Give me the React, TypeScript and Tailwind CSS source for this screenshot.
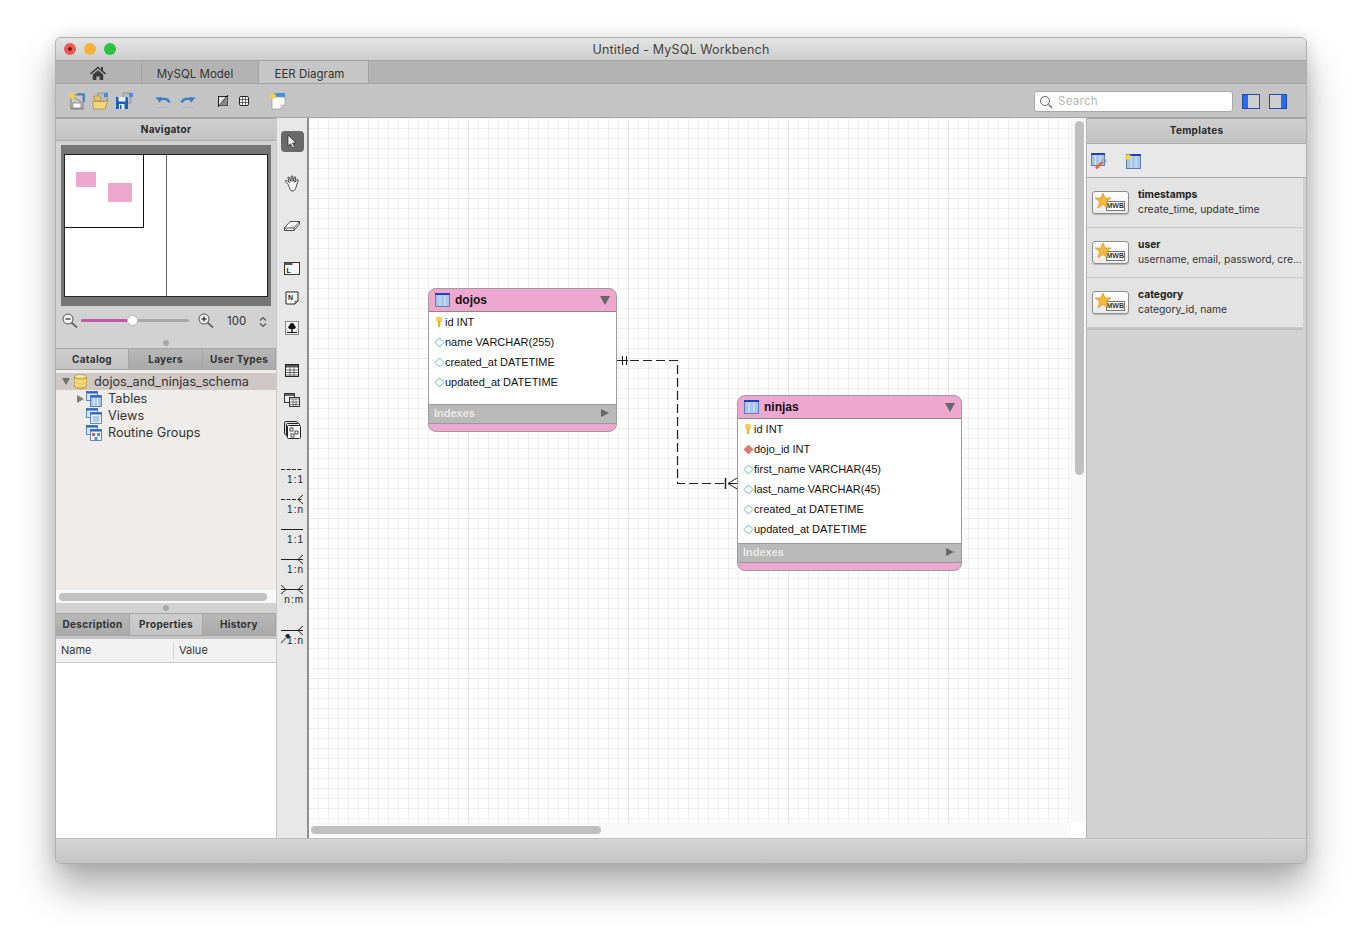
import React from 'react';

const ui = "font-['Inter','Liberation_Sans',sans-serif]";
const helv = "font-['Liberation_Sans',Arial,sans-serif]";

const TrafficLight = ({ color, dot }: { color: string; dot?: boolean }) => (
  <div className={`flex h-3 w-3 items-center justify-center rounded-full ${color}`}>
    {dot && <div className="h-1 w-1 rounded-full bg-[#7a1512]" />}
  </div>
);

const Home = () => (
  <svg width="16" height="14" viewBox="0 0 16 14">
    <path d="M8 .5 0 7.2l1 1.2L8 2.6l7 5.8 1-1.2-3-2.5V1h-2v2.6z" fill="#3c3c3c" />
    <path d="M2.8 8.6 8 4.3l5.2 4.3V14H9.6v-3.6H6.4V14H2.8z" fill="#3c3c3c" />
  </svg>
);

const Burst = ({ x = 0, y = 0 }: { x?: number; y?: number }) => (
  <path
    d={`M${x + 4} ${y}l.9 2.1 2-1-1 2 2.1.9-2.1.9 1 2-2-1-.9 2.1-.9-2.1-2 1 1-2L${x} ${y + 4}l2.1-.9-1-2 2 1z`}
    fill="#f5d44a"
  />
);

const NewDoc = () => (
  <svg width="18" height="18" viewBox="0 0 18 18">
    <rect x="9" y="1" width="8" height="9" fill="#4a90d9" />
    <rect x="3" y="3" width="12" height="14" fill="#c8c8c8" stroke="#666" strokeWidth=".8" />
    <rect x="5" y="11" width="8" height="5" fill="#fff" stroke="#555" strokeWidth=".6" />
    <path d="M6 5l7 5" stroke="#888" />
    <Burst />
  </svg>
);

const OpenDoc = () => (
  <svg width="18" height="18" viewBox="0 0 18 18">
    <rect x="6" y="1" width="9" height="9" fill="#bbb" stroke="#777" strokeWidth=".6" />
    <rect x="12" y="1" width="4" height="4" fill="#3f8ee0" />
    <path d="M1.5 4h6l1 2v3H3z" fill="#e4c472" stroke="#a9812c" strokeWidth=".6" />
    <path d="M1.5 17 .8 9.5h12L16 8l-3 9z" fill="#f5d67e" stroke="#b38a2f" strokeWidth=".8" />
  </svg>
);

const SaveDoc = () => (
  <svg width="18" height="18" viewBox="0 0 18 18">
    <rect x="7" y="1" width="8" height="10" fill="#bdbdbd" stroke="#777" strokeWidth=".6" />
    <rect x="13" y="1" width="4" height="4" fill="#3f8ee0" />
    <path d="M0 5h11l1 1v11H0z" fill="#1d5fb6" />
    <rect x="2.5" y="5" width="7" height="4.5" fill="#e8eef6" />
    <rect x="3" y="12" width="5.5" height="5" fill="#e8eef6" />
    <rect x="4" y="13" width="1.5" height="4" fill="#1d5fb6" />
  </svg>
);

const Undo = ({ flip }: { flip?: boolean }) => (
  <svg width="16" height="18" viewBox="0 0 16 18" className={flip ? '-scale-x-100' : ''}>
    <path d="M14.500 10.500C13 6.500 8 6 4.500 8" fill="none" stroke="#3f7fc4" strokeWidth="2.400" />
    <path d="M.5 5.500 7 5 5 11z" fill="#3f7fc4" />
    <rect x="2" y="15" width="12" height="1" fill="#b4b4b4" />
  </svg>
);

const NoGrid = () => (
  <svg width="12" height="14" viewBox="0 0 12 14">
    <rect x="1.500" y="2.500" width="9" height="9" fill="#ddd" stroke="#222" />
    <path d="M1 13 11 1" stroke="#111" />
    <path d="M2 11.500 10.500 2.500v9z" fill="#888" />
  </svg>
);

const GridIcon = () => (
  <svg width="10" height="10" viewBox="0 0 10 10">
    <rect x=".5" y=".5" width="9" height="9" rx="1.500" fill="#fff" stroke="#222" />
    <path d="M3.500 .5v9M6.500 .5v9M.5 3.500h9M.5 6.500h9" stroke="#333" strokeWidth=".7" />
  </svg>
);

const Note = () => (
  <svg width="17" height="18" viewBox="0 0 17 18">
    <rect x="3" y="1" width="13" height="4" fill="#3f8ee0" />
    <path d="M3 5h13v8l-4 4H3z" fill="#fff" stroke="#999" strokeWidth=".7" />
    <path d="M16 13h-4v4z" fill="#ddd" stroke="#999" strokeWidth=".6" />
    <Burst />
  </svg>
);

const Magnifier = ({ plus }: { plus?: boolean }) => (
  <svg width="16" height="16" viewBox="0 0 16 16">
    <path d="M9.500 9.500 15 14.500" stroke="#666" strokeWidth="1.800" />
    <circle cx="6" cy="6" r="5" fill="#f2f2f2" stroke="#555" />
    <path d="M3.500 6h5" stroke="#222" strokeWidth="1.200" />
    {plus && <path d="M6 3.500v5" stroke="#222" strokeWidth="1.200" />}
  </svg>
);

const Database = () => (
  <svg width="13" height="15" viewBox="0 0 13 15">
    <path d="M.5 2.500v10c0 1 2.500 2 6 2s6-1 6-2v-10z" fill="#efc85a" stroke="#a98a2c" strokeWidth=".7" />
    <ellipse cx="6.500" cy="2.500" rx="6" ry="2" fill="#f8e6a6" stroke="#a98a2c" strokeWidth=".7" />
    <path d="M.5 6c0 1 2.500 2 6 2s6-1 6-2M.5 9.500c0 1 2.500 2 6 2s6-1 6-2" fill="none" stroke="#fff3c4" />
  </svg>
);

const FolderIcon = ({ kind }: { kind: 'tables' | 'views' | 'routines' }) => (
  <svg width="16" height="16" viewBox="0 0 16 16">
    <rect x=".5" y=".5" width="11" height="9" fill="#dbe8f7" stroke="#3a6fb5" strokeWidth=".8" />
    <rect x=".5" y=".5" width="11" height="2" fill="#2d66c4" />
    <rect x="4.500" y="4.500" width="11" height="11" fill={kind === 'tables' ? '#a9c6e9' : '#eef4fb'} stroke="#3a6fb5" strokeWidth=".8" />
    <rect x="4.500" y="4.500" width="11" height="2" fill="#2d66c4" />
    {kind === 'tables' && <path d="M8 7v8M11.500 7v8" stroke="#fff" />}
    {kind === 'views' && <path d="M6.500 9h7M6.500 11h7M6.500 13h7" stroke="#7a9fcb" />}
    {kind === 'routines' && (
      <>
        <rect x="6" y="8" width="3" height="3" fill="#d8574f" />
        <rect x="11" y="8" width="3" height="3" fill="#5a8ad0" />
        <rect x="8.500" y="12" width="3" height="3" fill="#5a8ad0" />
      </>
    )}
  </svg>
);

const TreeRow = ({ label, kind, arrow }: { label: string; kind: 'tables' | 'views' | 'routines'; arrow?: boolean }) => (
  <div className="flex h-[17px] items-center pl-[21px]">
    <div className="w-[9px]">
      {arrow && <div className="h-0 w-0 border-y-[4.5px] border-l-[7px] border-y-transparent border-l-[#7f7f7f]" />}
    </div>
    <FolderIcon kind={kind} />
    <span className="ml-[6px] text-[12.7px] text-[#333]">{label}</span>
  </div>
);

const PanelHeader = ({ title, h }: { title: string; h: string }) => (
  <div className={`flex ${h} items-center justify-center border-y border-[#a9a9a9] bg-linear-to-b from-[#cfcfcf] to-[#c2c2c2] text-[10px] font-bold tracking-[0.3px] text-[#2a2a2a]`}>
    {title}
  </div>
);

const Tab = ({ label, active, w }: { label: string; active?: boolean; w: string }) => (
  <div
    className={`flex ${w} items-center justify-center border-r border-[#a5a5a5] text-[10px] font-bold tracking-[0.3px] text-[#333] ${
      active ? 'bg-linear-to-b from-[#cdcdcd] to-[#c2c2c2]' : 'bg-linear-to-b from-[#b8b8b8] to-[#a9a9a9]'
    }`}
  >
    {label}
  </div>
);

const Grip = ({ h }: { h: string }) => (
  <div className={`flex ${h} items-center justify-center`}>
    <div className="h-[6px] w-[6px] rounded-full bg-[#a8a8a8]" />
  </div>
);

const Navigator = () => (
  <div className="flex flex-col">
    <PanelHeader title="Navigator" h="h-[23px]" />
    <div className="mx-[5px] mt-[4px] h-[161px] w-[210px] bg-[#757575] pl-[3px] pt-[9px]">
      <div className="relative h-[143px] w-[204px] border border-[#222] bg-white">
        <div className="absolute bottom-0 left-[101px] top-0 w-px bg-[#666]" />
        <div className="absolute left-0 top-0 h-[73px] w-[79px] border-b border-r border-[#111]">
          <div className="absolute left-[11px] top-[17px] h-[15px] w-5 bg-[#eea8d0]" />
          <div className="absolute left-[43px] top-[28px] h-[19px] w-6 bg-[#eea8d0]" />
        </div>
      </div>
    </div>
    <div className="flex h-[31px] items-center pb-[2px] pl-[6px]">
      <Magnifier />
      <div className="relative ml-[3px] h-[3px] w-[108px] rounded-full bg-[#a8a8a8]">
        <div className="h-[3px] w-[51px] rounded-full bg-[#c05aa8]" />
        <div className="absolute left-[46px] top-[-4px] h-[11px] w-[11px] rounded-full border border-[#bbb] bg-white" />
      </div>
      <div className="ml-[9px]">
        <Magnifier plus />
      </div>
      <span className="ml-[13px] mt-[3px] text-[11.5px] text-[#333]">100</span>
      <svg width="8" height="12" viewBox="0 0 8 12" className="ml-[13px] mt-[3px]">
        <path d="M1 4.500 4 1.500l3 3M1 7.500l3 3 3-3" fill="none" stroke="#555" strokeWidth="1.200" />
      </svg>
    </div>
    <Grip h="h-[11px]" />
  </div>
);

const Catalog = () => (
  <div className="flex flex-col">
    <div className="flex h-[22px] border-y border-[#a5a5a5]">
      <Tab label="Catalog" active w="w-[73px]" />
      <Tab label="Layers" w="w-[74px]" />
      <Tab label="User Types" w="w-[73px]" />
    </div>
    <div className="h-[220px] bg-[#f0ecea] pt-[3px]">
      <div className="flex h-[17px] items-center bg-[#cfc8c6] pl-[6px]">
        <div className="h-0 w-0 border-x-[4.5px] border-t-[7px] border-x-transparent border-t-[#6f6f6f]" />
        <div className="ml-[4px]">
          <Database />
        </div>
        <span className="ml-[7px] text-[12.7px] text-[#333]">dojos_and_ninjas_schema</span>
      </div>
      <TreeRow label="Tables" kind="tables" arrow />
      <TreeRow label="Views" kind="views" />
      <TreeRow label="Routine Groups" kind="routines" />
    </div>
    <div className="flex h-[13px] items-center bg-[#f9f9f9] pl-[3px]">
      <div className="h-[8px] w-[208px] rounded-full bg-[#c0c0c0]" />
    </div>
    <Grip h="h-[10px]" />
  </div>
);

const Properties = () => (
  <div className="flex min-h-0 flex-1 flex-col">
    <div className="flex h-[23px] border-y border-[#a5a5a5]">
      <Tab label="Description" w="w-[74px]" />
      <Tab label="Properties" active w="w-[73px]" />
      <Tab label="History" w="w-[73px]" />
    </div>
    <div className="h-[3px] bg-[#c4c4c4]" />
    <div className="flex h-[24px] items-center border-b border-[#c4c4c4] bg-[#f2f2f2] text-[11px] text-[#333]">
      <div className="flex h-[17px] w-[118px] items-center border-r border-[#d0d0d0] pl-[5px]">Name</div>
      <div className="pl-[5px]">Value</div>
    </div>
    <div className="flex-1 bg-white" />
  </div>
);

const ToolIcon = ({ children, mt }: { children: React.ReactNode; mt: string }) => (
  <div className={`flex h-[30px] items-center justify-center ${mt}`}>{children}</div>
);

const Rel = ({ dashed, kind, label }: { dashed?: boolean; kind: 'one' | 'many' | 'nm' | 'pick'; label: string }) => (
  <div className="relative h-[20px] w-[24px]">
    <svg width="24" height="12" viewBox="0 0 24 12" className="absolute left-0 top-0">
      <path d="M1 5.500h22" stroke="#222" strokeDasharray={dashed ? '4 1.500' : undefined} />
      {(kind === 'many' || kind === 'nm' || kind === 'pick') && <path d="M23 1l-5 4.500 5 4.500" fill="none" stroke="#222" />}
      {kind === 'nm' && <path d="M1 1l5 4.500-5 4.500" fill="none" stroke="#222" />}
    </svg>
    {kind === 'pick' && (
      <svg width="11" height="11" viewBox="0 0 11 11" className="absolute left-0 top-[8px]">
        <path d="M1 10 6 5" stroke="#777" strokeWidth="1.500" />
        <path d="M5 3l3 3 2-2-1-3-2 0z" fill="#222" />
      </svg>
    )}
    <span className={`absolute right-0 top-[10px] text-[10px] leading-[11px] tracking-[1px] text-[#222] ${helv}`}>
      {label}
    </span>
  </div>
);

const ToolStrip = () => (
  <div className="flex w-[33px] shrink-0 flex-col border-r-2 border-l border-r-[#8f8f8f] border-l-[#c8c8c8] bg-[#e8e8e8]">
    <ToolIcon mt="mt-[8px]">
      <div className="flex h-[21px] w-[23px] items-center justify-center rounded-[4px] bg-[#6a6a6a]">
        <svg width="10" height="15" viewBox="0 0 10 15">
          <path d="M1 1v11l2.500-2.300L5.500 14l2-1-2-4H9z" fill="#f2f2f2" stroke="#222" strokeWidth=".7" />
        </svg>
      </div>
    </ToolIcon>
    <ToolIcon mt="mt-[12px]">
      <svg width="17" height="17" viewBox="0 0 16 16">
        <path d="M4 9 1.500 6.500c-1-1 .5-2 1.500-1L5 7 3.800 2.800c-.3-1 1-1.300 1.300-.3L6.500 6 6.800 1.500c0-1 1.400-1 1.400 0L8.500 6l1.200-3.800c.3-1 1.500-.6 1.300.4L10 7l2-2.500c.7-.8 1.800 0 1.200 1C12 8 12 10 11 12.500c-.6 1.500-1.500 2.500-3.500 2.500C5.500 15 5 11 4 9z" fill="#fff" stroke="#222" strokeWidth=".8" />
      </svg>
    </ToolIcon>
    <ToolIcon mt="mt-[13px]">
      <svg width="16" height="12" viewBox="0 0 16 12">
        <path d="M.5 8 6 1.500h9.500V4L10 10.500H.5z" fill="#fff" stroke="#222" strokeWidth=".8" />
        <path d="M.5 8H10l5.500-6.500M10 8v2.500" fill="none" stroke="#222" strokeWidth=".8" />
      </svg>
    </ToolIcon>
    <ToolIcon mt="mt-[12px]">
      <svg width="16" height="13" viewBox="0 0 16 13">
        <rect x=".5" y=".5" width="15" height="12" fill="#f6f6f6" stroke="#333" />
        <rect x=".5" y=".5" width="8" height="2.500" fill="#555" />
        <text x="2.500" y="10.500" fontSize="7" fontWeight="700" fill="#222" fontFamily="Liberation Sans">L</text>
      </svg>
    </ToolIcon>
    <ToolIcon mt="mt-0">
      <svg width="14" height="14" viewBox="0 0 14 14">
        <path d="M1 1h12v9l-3 3H1z" fill="#fff" stroke="#222" />
        <path d="M13 10h-3v3z" fill="#ccc" stroke="#222" strokeWidth=".6" />
        <text x="3" y="8.500" fontSize="7" fontWeight="700" fill="#222" fontFamily="Liberation Sans">N</text>
      </svg>
    </ToolIcon>
    <ToolIcon mt="mt-0">
      <svg width="14" height="14" viewBox="0 0 14 14">
        <rect x=".5" y=".5" width="13" height="13" fill="#f4f4f4" stroke="#888" />
        <path d="M7 2c2 0 2.500 1.500 2.500 2.500 1.500.5 2 3-.5 3.500H5C2.500 7.500 3 5 4.500 4.500 4.500 3.500 5 2 7 2z" fill="#111" />
        <rect x="6.300" y="8" width="1.400" height="3" fill="#111" />
        <rect x="2" y="11" width="10" height="1" fill="#111" />
      </svg>
    </ToolIcon>
    <ToolIcon mt="mt-[12px]">
      <svg width="14" height="13" viewBox="0 0 14 13">
        <rect x=".5" y=".5" width="13" height="12" fill="#fff" stroke="#222" />
        <rect x="1" y="1" width="12" height="2.500" fill="#555" />
        <path d="M1 6h12M1 8.500h12M1 11h12M5 3.500v9M9 3.500v9" stroke="#444" strokeWidth=".8" />
      </svg>
    </ToolIcon>
    <ToolIcon mt="mt-0">
      <svg width="16" height="14" viewBox="0 0 16 14">
        <rect x=".5" y=".5" width="10" height="9" fill="#eee" stroke="#333" />
        <path d="M1 2h9" stroke="#333" strokeWidth="1.500" />
        <rect x="5.500" y="4.500" width="10" height="9" fill="#fff" stroke="#333" />
        <path d="M6 6h9M6 9h9M6 11.500h9M9 6v7M12 6v7" stroke="#444" strokeWidth=".7" />
      </svg>
    </ToolIcon>
    <ToolIcon mt="mt-0">
      <svg width="17" height="18" viewBox="0 0 17 18">
        <rect x=".5" y=".5" width="13" height="13" rx="1" fill="#ddd" stroke="#222" />
        <rect x="2.500" y="2.500" width="13" height="13" rx="1" fill="#eee" stroke="#222" />
        <rect x="3.500" y="4.500" width="13" height="13" rx="1" fill="#fff" stroke="#222" />
        <rect x="6" y="7" width="3" height="3" fill="#fff" stroke="#222" strokeWidth=".8" />
        <rect x="11" y="10" width="3" height="3" fill="#fff" stroke="#222" strokeWidth=".8" />
        <rect x="7" y="13" width="3" height="3" fill="#fff" stroke="#222" strokeWidth=".8" />
      </svg>
    </ToolIcon>
    <ToolIcon mt="mt-[14px]"><Rel dashed kind="one" label="1:1" /></ToolIcon>
    <ToolIcon mt="mt-0"><Rel dashed kind="many" label="1:n" /></ToolIcon>
    <ToolIcon mt="mt-0"><Rel kind="one" label="1:1" /></ToolIcon>
    <ToolIcon mt="mt-0"><Rel kind="many" label="1:n" /></ToolIcon>
    <ToolIcon mt="mt-0"><Rel kind="nm" label="n:m" /></ToolIcon>
    <ToolIcon mt="mt-[11px]"><Rel kind="pick" label="1:n" /></ToolIcon>
  </div>
);

const KeyIcon = () => (
  <svg width="8" height="12" viewBox="0 0 8 12">
    <ellipse cx="4" cy="3.500" rx="3" ry="3" fill="#f5cf4d" />
    <rect x="3" y="5" width="2.200" height="6" fill="#e6b32e" />
  </svg>
);

const Diamond = ({ fk }: { fk?: boolean }) => (
  <svg width="11" height="11" viewBox="0 0 11 11">
    <path d="M5.500 1 10 5.500 5.500 10 1 5.500z" fill={fk ? '#e0767a' : '#fff'} stroke={fk ? '#c98080' : '#62b5ba'} />
  </svg>
);

const TableGlyph = () => (
  <svg width="15" height="14" viewBox="0 0 15 14">
    <rect x=".5" y=".5" width="14" height="13" fill="#a9c6e9" stroke="#5a7fb5" />
    <rect x="0" y="0" width="15" height="2" fill="#1f3fc4" />
    <path d="M5 2.500v10.500M10 2.500v10.500" stroke="#dce9f7" />
  </svg>
);

type Column = { name: string; type: 'pk' | 'fk' | 'col' };

const EerTable = ({ title, cols, pos, bodyPad }: { title: string; cols: Column[]; pos: string; bodyPad: string }) => (
  <div className={`absolute flex flex-col overflow-hidden rounded-[8px] border border-[#9c9c9c] bg-[#eea8d0] ${helv} ${pos}`}>
    <div className="flex h-[23px] shrink-0 items-center border-b border-[#888] pl-[6px] pr-[6px]">
      <TableGlyph />
      <span className="ml-[5px] text-[12px] font-bold text-[#111]">{title}</span>
      <div className="ml-auto h-0 w-0 border-x-[5px] border-t-[9px] border-x-transparent border-t-[#666]" />
    </div>
    <div className={`flex flex-col bg-white ${bodyPad}`}>
      {cols.map((c) => (
        <div key={c.name} className="flex h-[20px] shrink-0 items-center pl-[4px] text-[11px] text-[#111]">
          <div className="flex w-[12px] justify-center">
            {c.type === 'pk' ? <KeyIcon /> : <Diamond fk={c.type === 'fk'} />}
          </div>
          <span>{c.name}</span>
        </div>
      ))}
    </div>
    <div className="flex h-[20px] shrink-0 items-center border-y border-[#999] bg-[#b9b9b9] pb-[2px] pl-[5px] pr-[7px]">
      <span className="text-[11px] font-bold text-[#e8e8e8]">Indexes</span>
      <div className="ml-auto h-0 w-0 border-y-[4.5px] border-l-[8px] border-y-transparent border-l-[#666]" />
    </div>
    <div className="flex-1" />
  </div>
);

const Canvas = () => (
  <div className="relative min-w-0 flex-1 overflow-hidden bg-white">
    <div className="absolute bottom-[15px] left-0 right-[15px] top-0 bg-[linear-gradient(to_right,#e6e6e6_1px,transparent_1px),linear-gradient(to_bottom,#e6e6e6_1px,transparent_1px),linear-gradient(to_right,#f0f0f0_1px,transparent_1px),linear-gradient(to_bottom,#f0f0f0_1px,transparent_1px)] bg-[size:160px_160px,160px_160px,10px_10px,10px_10px] bg-[position:-1px_80px,-1px_80px,-1px_0px,-1px_0px]" />
    <svg width="777" height="720" viewBox="309 118 777 720" className="absolute left-0 top-0">
      <path d="M617 360.500h60.500v123H738" fill="none" stroke="#222" strokeWidth="1.200" strokeDasharray="9 4" />
      <rect x="617" y="359" width="10" height="3" fill="#fff" />
      <path d="M617 360.500h11M622.500 356v9M626.500 356v9" fill="none" stroke="#222" />
      <path d="M725.500 478v11" stroke="#222" strokeWidth="1.500" />
      <path d="M738 477.500l-10 6 10 6" fill="none" stroke="#222" />
    </svg>
    <EerTable
      title="dojos"
      pos="left-[119px] top-[170px] h-[144px] w-[189px]"
      bodyPad="h-[92px]"
      cols={[
        { name: 'id INT', type: 'pk' },
        { name: 'name VARCHAR(255)', type: 'col' },
        { name: 'created_at DATETIME', type: 'col' },
        { name: 'updated_at DATETIME', type: 'col' },
      ]}
    />
    <EerTable
      title="ninjas"
      pos="left-[428px] top-[277px] h-[176px] w-[225px]"
      bodyPad="h-[124px]"
      cols={[
        { name: 'id INT', type: 'pk' },
        { name: 'dojo_id INT', type: 'fk' },
        { name: 'first_name VARCHAR(45)', type: 'col' },
        { name: 'last_name VARCHAR(45)', type: 'col' },
        { name: 'created_at DATETIME', type: 'col' },
        { name: 'updated_at DATETIME', type: 'col' },
      ]}
    />
    <div className="absolute bottom-0 right-0 top-0 w-[15px] bg-[#f9f9f9] pl-[4px] pt-[3px]">
      <div className="h-[354px] w-[9px] rounded-full bg-[#c0c0c0]" />
    </div>
    <div className="absolute bottom-0 left-0 right-[15px] h-[15px] bg-[#f9f9f9] pl-[2px] pt-[3px]">
      <div className="h-[8px] w-[290px] rounded-full bg-[#c0c0c0]" />
    </div>
    <div className="absolute bottom-0 right-0 h-[16px] w-[15px] bg-white" />
  </div>
);

const MwbBadge = () => (
  <div className="relative h-[23px] w-[37px] rounded-[3px] border border-[#8e8e8e] bg-linear-to-b from-white to-[#ececec] shadow-[0_1px_1px_rgba(0,0,0,0.2)]">
    <div className={`absolute bottom-[2px] right-[3px] border border-[#777] bg-white text-[7px] font-bold leading-[8px] text-[#333] ${helv}`}>
      MWB
    </div>
    <svg width="16" height="15" viewBox="0 0 16 15" className="absolute left-[2px] top-[1px]">
      <path d="M8 0l2.200 5H16l-4.500 3.600L13 15 8 11.500 3 15l1.500-6.400L0 5h5.800z" fill="#f5b93c" stroke="#d08a1c" strokeWidth=".6" />
    </svg>
  </div>
);

const TemplateItem = ({ name, fields }: { name: string; fields: string }) => (
  <div className="flex h-[50px] items-center border-b border-[#c8c8c8] bg-[#e3e3e3] pb-[2px] pl-[5px]">
    <div className="mt-[2px]">
      <MwbBadge />
    </div>
    <div className="ml-[9px] min-w-0 text-[10.3px] leading-[15px] text-[#333]">
      <div className="font-bold text-[#222]">{name}</div>
      <div className="whitespace-nowrap">{fields}</div>
    </div>
  </div>
);

const Templates = () => (
  <div className="flex w-[220px] shrink-0 flex-col border-l border-[#b5b5b5] bg-[#d2d2d2]">
    <PanelHeader title="Templates" h="h-[26px] pb-[1px]" />
    <div className="flex h-[34px] items-center gap-[17px] border-b border-[#a5a5a5] bg-[#e8e8e8] pl-[4px]">
      <svg width="16" height="16" viewBox="0 0 16 16">
        <rect x=".5" y=".5" width="13" height="12" fill="#a9c6e9" stroke="#5a7fb5" />
        <rect x="0" y="0" width="14" height="2" fill="#1f3fc4" />
        <path d="M4.500 2v10M9 2v10" stroke="#dce9f7" />
        <path d="M5 15.500 11 9.500" stroke="#e8662a" strokeWidth="2.500" />
        <circle cx="13" cy="8" r="2" fill="none" stroke="#999" />
      </svg>
      <svg width="17" height="16" viewBox="0 0 17 16">
        <rect x="2.500" y="1.500" width="14" height="14" fill="#a9c6e9" stroke="#5a7fb5" />
        <rect x="2" y="1" width="15" height="2" fill="#1f3fc4" />
        <path d="M7 3v12M12 3v12" stroke="#dce9f7" />
        <Burst />
      </svg>
    </div>
    <div className="mr-[3px] flex flex-col border-b-2 border-[#c0c0c0]">
      <TemplateItem name="timestamps" fields="create_time, update_time" />
      <TemplateItem name="user" fields="username, email, password, cre..." />
      <TemplateItem name="category" fields="category_id, name" />
    </div>
  </div>
);

export default function App() {
  return (
    <div className={`h-[937px] w-[1362px] overflow-hidden bg-white pl-[55px] pt-[37px] ${ui}`}>
      <div className="flex h-[827px] w-[1252px] flex-col overflow-hidden rounded-[6px] border border-[#b0b0b0] bg-[#d2d2d2] shadow-[0_24px_38px_rgba(0,0,0,0.32),0_0_16px_rgba(0,0,0,0.12)]">
        {/* title bar */}
        <div className="relative flex h-[22px] shrink-0 items-center justify-center bg-linear-to-b from-[#e4e4e4] to-[#cdcdcd] pt-[2px]">
          <div className="absolute left-[8px] top-[5px] flex gap-2">
            <TrafficLight color="bg-[#ee5b52]" dot />
            <TrafficLight color="bg-[#f5b23a]" />
            <TrafficLight color="bg-[#2cc23f]" />
          </div>
          <span className="text-[12.5px] tracking-[0.15px] text-[#444]">Untitled - MySQL Workbench</span>
        </div>
        {/* tabs */}
        <div className="flex h-[24px] shrink-0 border-y border-[#a3a3a3] bg-[#b3b3b3] text-[11.5px] text-[#333]">
          <div className="flex w-[86px] items-center justify-center border-r border-[#a3a3a3] pr-[2px] pt-[2px]">
            <Home />
          </div>
          <div className="flex w-[117px] items-center justify-center border-r border-[#a3a3a3] pr-[10px] pt-[5px]">MySQL Model</div>
          <div className="flex w-[110px] items-center justify-center border-r border-[#a3a3a3] bg-[#c6c6c6] pr-[8px] pt-[5px]">EER Diagram</div>
        </div>
        {/* toolbar */}
        <div className="flex h-[34px] shrink-0 items-center border-b border-[#a5a5a5] bg-[#c4c4c4]">
          <div className="ml-[12px] flex items-center gap-[6px]">
            <NewDoc />
            <OpenDoc />
            <SaveDoc />
          </div>
          <div className="ml-[21px] flex items-center gap-[9px]">
            <Undo />
            <Undo flip />
          </div>
          <div className="ml-[21px] flex items-center gap-[10px]">
            <NoGrid />
            <GridIcon />
          </div>
          <div className="ml-[20px]">
            <Note />
          </div>
          <div className="ml-auto mt-[2px] flex h-[21px] w-[199px] items-center rounded-[3px] border border-[#a8a8a8] bg-white pl-[4px]">
            <svg width="14" height="14" viewBox="0 0 14 14">
              <circle cx="6" cy="6" r="4.500" fill="none" stroke="#666" />
              <path d="M9.500 9.500 13 13" stroke="#666" strokeWidth="1.200" />
            </svg>
            <span className="ml-[5px] text-[11.5px] tracking-[0.3px] text-[#b5b5b5]">Search</span>
          </div>
          <div className="ml-[9px] mt-[2px] flex h-[15px] w-[18px] border border-[#1d4fa8] bg-[#cfcfcf]">
            <div className="w-[5px] bg-[#2a6cf0]" />
          </div>
          <div className="ml-[9px] mr-[19px] mt-[2px] flex h-[15px] w-[18px] justify-end border border-[#1d4fa8] bg-[#cfcfcf]">
            <div className="w-[5px] bg-[#2a6cf0]" />
          </div>
        </div>
        {/* main area */}
        <div className="flex min-h-0 flex-1">
          <div className="flex w-[220px] shrink-0 flex-col">
            <Navigator />
            <Catalog />
            <Properties />
          </div>
          <ToolStrip />
          <Canvas />
          <Templates />
        </div>
        {/* status bar */}
        <div className="h-[25px] shrink-0 border-t border-[#bfbfbf] bg-linear-to-b from-[#d6d6d6] to-[#c4c4c4]" />
      </div>
    </div>
  );
}
